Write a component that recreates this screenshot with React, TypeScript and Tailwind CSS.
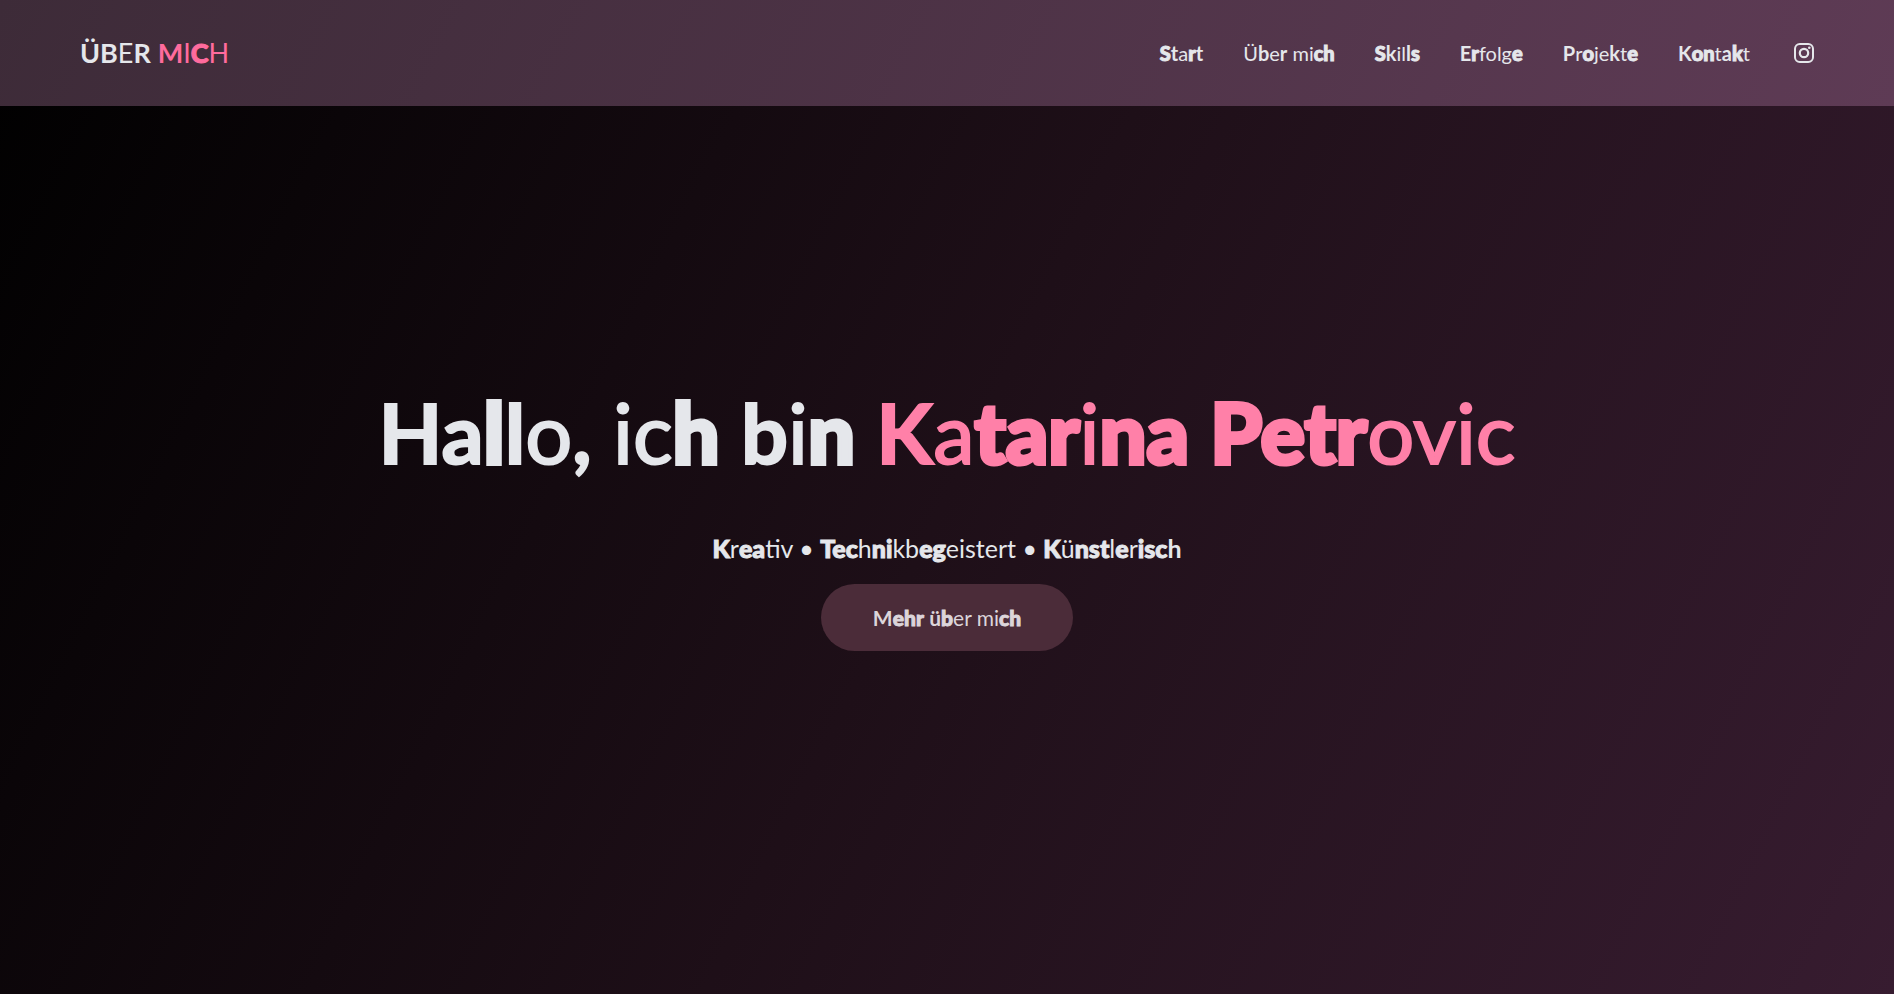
import { Fragment } from "react";

const weights: Record<string, string> = {
  "4": "font-normal",
  "7": "font-bold",
  "9": "font-black [-webkit-text-stroke:1px_currentColor]",
};

const displayWeights: Record<string, string> = {
  "4": "font-normal [-webkit-text-stroke:2px_currentColor]",
  "7": "font-bold [-webkit-text-stroke:2px_currentColor]",
  "9": "font-black [-webkit-text-stroke:4px_currentColor]",
};

type MixedProps = { text: string; pattern: string; display?: boolean };

/** Text whose strokes vary in weight; `pattern` holds one digit per letter. */
function Mixed({ text, pattern, display = false }: MixedProps) {
  const classes = display ? displayWeights : weights;
  const runs: { text: string; weight: string }[] = [];
  Array.from(text).forEach((letter, i) => {
    const weight = pattern[i] ?? "4";
    const last = runs[runs.length - 1];
    if (last && last.weight === weight) last.text += letter;
    else runs.push({ text: letter, weight });
  });
  return (
    <Fragment>
      {runs.map((run, i) => (
        <span key={i} className={classes[run.weight]}>
          {run.text}
        </span>
      ))}
    </Fragment>
  );
}

const links = [
  { text: "Start", pattern: "97497", href: "#start" },
  { text: "Über mich", pattern: "474744499", href: "#about" },
  { text: "Skills", pattern: "974479", href: "#skills" },
  { text: "Erfolge", pattern: "7944449", href: "#erfolge" },
  { text: "Projekte", pattern: "74944749", href: "#projekte" },
  { text: "Kontakt", pattern: "7994794", href: "#kontakt" },
];

function InstagramIcon() {
  return (
    <svg viewBox="0 0 20 20" className="size-5" fill="none" stroke="currentColor" aria-hidden="true">
      <rect x="1" y="1" width="18" height="18" rx="4.8" strokeWidth="2" />
      <circle cx="10" cy="10" r="4.2" strokeWidth="2.2" />
      <circle cx="15.3" cy="4.7" r="1.3" fill="currentColor" stroke="none" />
    </svg>
  );
}

export default function App() {
  return (
    <div className="flex min-h-screen flex-col bg-linear-[116deg,#000000,#1e0f18_50%,#371c30] font-['Lato','Open_Sans',sans-serif] text-gray-200">
      <header className="flex h-[106px] items-center justify-between bg-linear-[116deg,#3d2b38,#5e3b55] px-20">
        <a href="#start" className="text-[27px] leading-10 whitespace-nowrap">
          <Mixed text="ÜBER " pattern="77474" />
          <span className="text-[#ff6b9d]">
            <Mixed text="MICH" pattern="7494" />
          </span>
        </a>
        <nav className="flex items-center gap-10 text-xl">
          {links.map((link) => (
            <a key={link.href} href={link.href} className="whitespace-nowrap">
              <Mixed text={link.text} pattern={link.pattern} />
            </a>
          ))}
          <a href="#instagram" aria-label="Instagram" className="ml-1">
            <InstagramIcon />
          </a>
        </nav>
      </header>
      <main className="flex flex-1 flex-col items-center px-8 pt-[278px] text-center">
        <h1 className="text-[83px] leading-[96px]">
          <Mixed display text="Hallo, ich bin " pattern="779747444947494" />
          <span className="text-[#ff80a8]">
            <Mixed display text="Katarina Petrovic" pattern="74999499499994444" />
          </span>
        </h1>
        <p className="mt-12 text-[25px] leading-10">
          <Mixed text="Kreativ " pattern="94994444" />
          <Mixed text="• Technikbegeistert " pattern="44999499449944444444" />
          <Mixed text="• Künstlerisch" pattern="44949994949997" />
        </p>
        <button type="button" className="mt-4 rounded-full bg-[#4b2c39] px-[52px] py-5 text-[21px] leading-[27px] text-[#dcd5da]">
          <Mixed text="Mehr über mich" pattern="79994794444499" />
        </button>
      </main>
    </div>
  );
}
